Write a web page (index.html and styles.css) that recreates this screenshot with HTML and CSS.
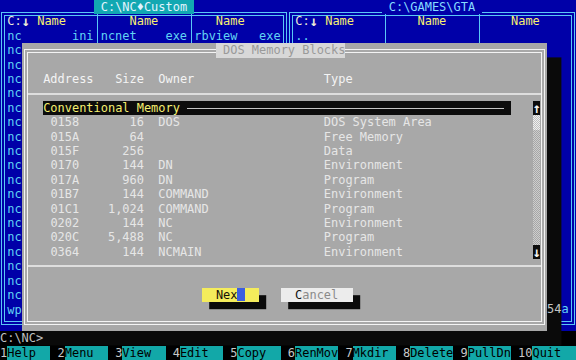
FILE: index.html
```html
<!DOCTYPE html>
<html lang="en">
<head>
    <link rel="stylesheet" href="styles.css">
</head>
<body>
<div class="screen">
    <div class="panels">
        <section class="panel">
            <div class="ptitle active">C:\NC&#9830;Custom</div>
            <div class="files">
                <div class="fcol">
                    <div class="hdr"><span class="drv">C:<i class="ar">&#8595;</i></span> Name</div>
                    <div class="file"><span>nc</span><span>ini</span></div>
                    <div class="file"><span>nc</span></div>
                    <div class="file"><span>nc</span></div>
                    <div class="file"><span>nc</span></div>
                    <div class="file"><span>nc</span></div>
                    <div class="file"><span>nc</span></div>
                    <div class="file"><span>nc</span></div>
                    <div class="file"><span>nc</span></div>
                    <div class="file"><span>nc</span></div>
                    <div class="file"><span>nc</span></div>
                    <div class="file"><span>nc</span></div>
                    <div class="file"><span>nc</span></div>
                    <div class="file"><span>nc</span></div>
                    <div class="file"><span>nc</span></div>
                    <div class="file"><span>nc</span></div>
                    <div class="file"><span>nc</span></div>
                    <div class="file"><span>nc</span></div>
                    <div class="file"><span>nc</span></div>
                    <div class="file"><span>nc</span></div>
                    <div class="file"><span>wp</span></div>
                </div>
                <div class="fcol">
                    <div class="hdr mid">Name</div>
                    <div class="file"><span>ncnet</span><span>exe</span></div>
                </div>
                <div class="fcol">
                    <div class="hdr near">Name</div>
                    <div class="file"><span>rbview</span><span>exe</span></div>
                </div>
            </div>
        </section>
        <section class="panel">
            <div class="ptitle">C:\GAMES\GTA</div>
            <div class="files">
                <div class="fcol">
                    <div class="hdr"><span class="drv">C:<i class="ar">&#8595;</i></span> Name</div>
                    <div class="file"><span>..</span></div>
                </div>
                <div class="fcol">
                    <div class="hdr mid">Name</div>
                </div>
                <div class="fcol">
                    <div class="hdr mid">Name</div>
                    <div class="file last"><span></span><span><span class="under">54</span>a</span></div>
                </div>
            </div>
        </section>
    </div>
    <div class="cmdline">C:\NC&gt;</div>
    <div class="keybar">
        <div class="key"><b>1</b><span>Help</span></div>
        <div class="key"><b>2</b><span>Menu</span></div>
        <div class="key"><b>3</b><span>View</span></div>
        <div class="key"><b>4</b><span>Edit</span></div>
        <div class="key"><b>5</b><span>Copy</span></div>
        <div class="key"><b>6</b><span>RenMov</span></div>
        <div class="key"><b>7</b><span>Mkdir</span></div>
        <div class="key"><b>8</b><span>Delete</span></div>
        <div class="key"><b>9</b><span>PullDn</span></div>
        <div class="key"><b>10</b><span>Quit</span></div>
    </div>

    <div class="dialog">
        <div class="dtitle">DOS Memory Blocks</div>
        <div class="blank"></div>
        <div class="mem-head">
            <span>Address</span><span class="num">Size</span><span class="own">Owner</span><span>Type</span>
        </div>
        <div class="sep"></div>
        <div class="mem">
            <div class="mem-list">
                <div class="group"><span>Conventional Memory</span><i class="rule"></i></div>
                <div class="mem-row"><span>0158</span><span class="num">16</span><span class="own">DOS</span><span>DOS System Area</span></div>
                <div class="mem-row"><span>015A</span><span class="num">64</span><span class="own"></span><span>Free Memory</span></div>
                <div class="mem-row"><span>015F</span><span class="num">256</span><span class="own"></span><span>Data</span></div>
                <div class="mem-row"><span>0170</span><span class="num">144</span><span class="own">DN</span><span>Environment</span></div>
                <div class="mem-row"><span>017A</span><span class="num">960</span><span class="own">DN</span><span>Program</span></div>
                <div class="mem-row"><span>01B7</span><span class="num">144</span><span class="own">COMMAND</span><span>Environment</span></div>
                <div class="mem-row"><span>01C1</span><span class="num">1,024</span><span class="own">COMMAND</span><span>Program</span></div>
                <div class="mem-row"><span>0202</span><span class="num">144</span><span class="own">NC</span><span>Environment</span></div>
                <div class="mem-row"><span>020C</span><span class="num">5,488</span><span class="own">NC</span><span>Program</span></div>
                <div class="mem-row"><span>0364</span><span class="num">144</span><span class="own">NCMAIN</span><span>Environment</span></div>
            </div>
            <div class="scroll">
                <span class="arr">&#8593;</span>
                <span class="track"><span class="thumb"></span></span>
                <span class="arr">&#8595;</span>
            </div>
        </div>
        <div class="sep"></div>
        <div class="blank"></div>
        <div class="buttons">
            <div class="btn next">Nex<span class="cursor"></span></div>
            <div class="btn cancel"><span class="hot">C</span>ancel</div>
        </div>
    </div>
</div>
</body>
</html>
```

FILE: styles.css
```css
    /* 80x25 text screen: one cell is 1ch wide, 14.4px high */
    body {
        margin: 0;
        background: #000;
    }

    .screen {
        position: relative;
        width: 576px;
        height: 360px;
        overflow: hidden;
        font-family: "DejaVu Sans Mono", "Liberation Mono", monospace;
        font-size: 11.96px;
        line-height: 14.4px;
        color: #c0c0c0;
        white-space: nowrap;
    }

    /* File panels */
    .panels {
        display: flex;
        height: 331.2px;
    }

    .panel {
        position: relative;
        width: 288px;
        box-sizing: border-box;
        padding: 14.4px 1ch 0;
        background: #0000a8;
    }

    .panel::before,
    .panel::after {
        content: "";
        position: absolute;
        border: 1px solid #5ac8f5;
    }

    .panel::before {
        top: 12px;
        left: 1px;
        right: 1px;
        bottom: 6px;
    }

    .panel::after {
        top: 15px;
        left: 4px;
        right: 4px;
        bottom: 9px;
    }

    .ptitle {
        position: absolute;
        top: 0;
        left: 13ch;
        z-index: 1;
        padding: 0 1ch;
        background: #0000a8;
        color: #86dcff;
    }

    .ptitle.active {
        background: #12a8b2;
        color: #e2f4ff;
    }

    .files {
        display: flex;
    }

    .fcol {
        display: flex;
        flex-direction: column;
        width: 12ch;
        height: 302.4px;
        color: #62d4f4;
    }

    .fcol + .fcol {
        margin-left: 0.5ch;
        padding-left: calc(0.5ch - 1px);
        border-left: 1px solid #5ac8f5;
    }

    .hdr {
        color: #f8f070;
    }

    .hdr.mid {
        padding-left: 4ch;
    }

    .hdr.near {
        padding-left: 3ch;
    }

    .drv {
        color: #ececd8;
    }

    /* arrows drawn a bit taller than the text font gives them */
    .ar {
        display: inline-block;
        width: 1ch;
        font-style: normal;
        font-weight: bold;
        font-size: 14px;
        line-height: 14.4px;
        vertical-align: top;
        text-align: center;
    }

    .file {
        display: flex;
        justify-content: space-between;
    }

    .file.last {
        margin-top: auto;
    }

    .under {
        position: relative;
        z-index: 1;
        color: #c4c4c4;
    }

    .cmdline {
        position: relative;
        z-index: 1;
        height: 14.4px;
    }

    /* Function key bar */
    .keybar {
        display: flex;
    }

    .key {
        display: flex;
        width: 8ch;
    }

    .key b {
        font-weight: normal;
        color: #c8c8c8;
    }

    .key span {
        width: 6ch;
        background: #12a8a8;
        color: #000;
    }

    /* Memory dialog */
    .dialog {
        position: absolute;
        left: 21.6px;
        top: 43.2px;
        width: 73ch;
        height: 288px;
        background: #a8a8a8;
        box-shadow: 14.4px 14.4px 0 #0a0a0a;
        color: #e6e6e6;
    }

    .dialog::before,
    .dialog::after {
        content: "";
        position: absolute;
        border: 1px solid #f4f4f4;
    }

    .dialog::before {
        top: 6px;
        left: 2px;
        right: 2px;
        bottom: 6px;
    }

    .dialog::after {
        top: 9px;
        left: 5px;
        right: 5px;
        bottom: 9px;
    }

    .dtitle {
        position: relative;
        z-index: 1;
        width: 17ch;
        margin-left: 27ch;
        padding-left: 1ch;
        background: #d8d8d8;
        color: #9a9a9a;
    }

    .blank {
        height: 14.4px;
    }

    .sep {
        height: 14.4px;
        margin: 0 5px;
        background: linear-gradient(#dedede, #dedede) no-repeat 0 50% / 100% 2px;
    }

    .mem-head {
        display: grid;
        grid-template-columns: 10ch 4ch 25ch auto;
        padding-left: 3ch;
        color: #f4f4f4;
    }

    .mem {
        display: flex;
    }

    .mem-list {
        width: 71ch;
    }

    .group {
        display: flex;
        align-items: center;
        width: 65ch;
        height: 14.4px;
        margin-left: 3ch;
        background: #0c0c0c;
        color: #f4f070;
    }

    .rule {
        flex: 1;
        margin: 1px 1ch 0;
        border-top: 1px solid #c4c4c4;
    }

    .mem-row {
        display: grid;
        grid-template-columns: 4ch 9ch 25ch auto;
        padding-left: 4ch;
    }

    .num {
        text-align: right;
    }

    .own {
        padding-left: 2ch;
    }

    .scroll {
        display: flex;
        flex-direction: column;
        width: 1ch;
    }

    .arr {
        height: 14.4px;
        overflow: hidden;
        background: #0c0c0c;
        color: #f4f4f4;
        font-size: 14px;
        font-weight: bold;
        text-align: center;
    }

    .track {
        flex: 1;
        background: repeating-conic-gradient(#cdcdcd 0 25%, #a6a6a6 0 50%) 0 0 / 2px 2px;
    }

    .thumb {
        display: block;
        height: 14.4px;
        background: repeating-conic-gradient(#f0f0f0 0 25%, #c0c0c0 0 50%) 0 0 / 2px 2px;
    }

    .buttons {
        display: flex;
        gap: 3ch;
        margin-left: 25ch;
    }

    .btn {
        height: 14.4px;
        padding-left: 2ch;
        box-sizing: border-box;
        box-shadow: 7.2px 7.2px 0 #0a0a0a;
    }

    .next {
        width: 8ch;
        background: #f4ec5c;
        color: #141008;
    }

    .cursor {
        display: inline-block;
        width: 1ch;
        height: 13px;
        vertical-align: top;
        background: #3c5ee0;
    }

    .cancel {
        width: 10ch;
        background: #ececec;
        color: #8a8a8a;
    }

    .hot {
        color: #101010;
    }
```
